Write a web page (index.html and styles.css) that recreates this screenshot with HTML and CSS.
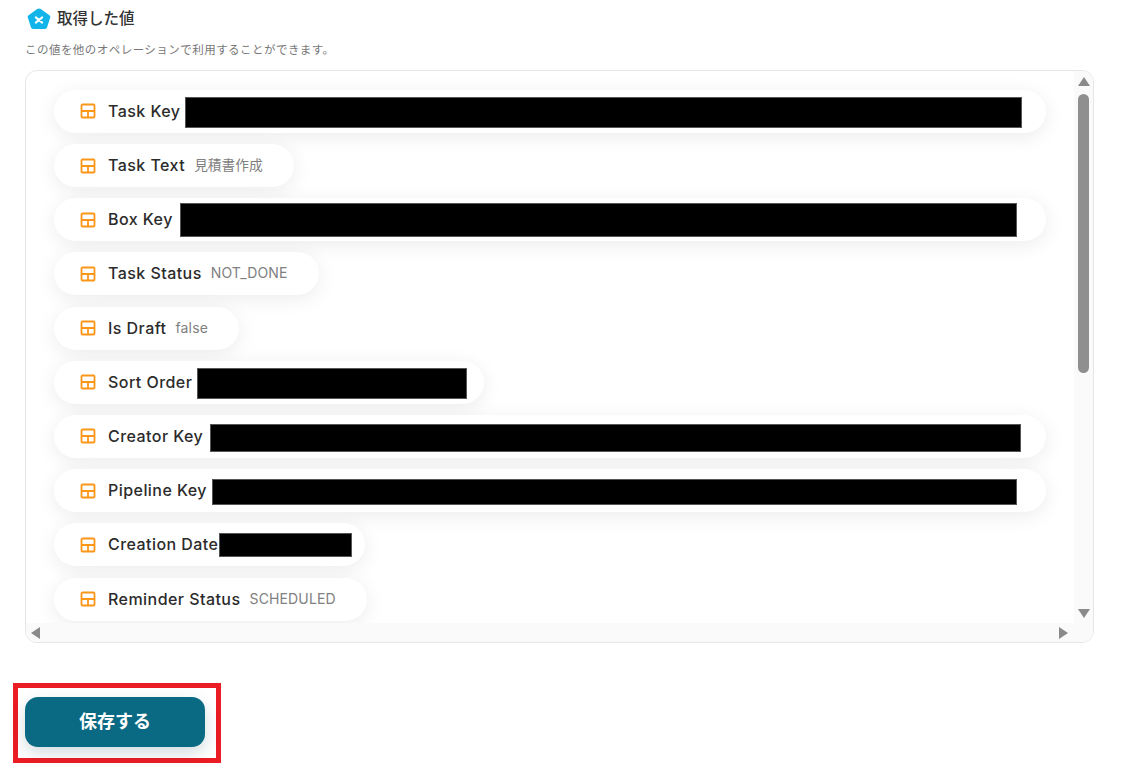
FILE: index.html
```html
<!DOCTYPE html>
<html lang="ja">
<head>
    <meta charset="UTF-8">
    <title>取得した値</title>
    <link rel="stylesheet" href="styles.css">
</head>
<body>
    <div class="page">
        <div class="heading">
            <svg class="heading-icon" width="24" height="22" viewBox="0 0 24 22">
                <path fill="#12b5ea" d="M10.2 1 1.6 7.2c-.8.6-1.1 1.5-.8 2.4l3.2 10c.3.9 1.1 1.4 2 1.4h12c.9 0 1.7-.5 2-1.4l3.2-10c.3-.9 0-1.8-.8-2.4L13.8 1c-1.1-.8-2.5-.8-3.6 0z"/>
                <path fill="none" stroke="#fff" stroke-width="2" stroke-linecap="round" d="M8.8 9.4 15.2 14.6M15.2 9.4 8.8 14.6"/>
            </svg>
            <h2 class="title">取得した値</h2>
        </div>
        <p class="subtitle">この値を他のオペレーションで利用することができます。</p>

        <div class="panel">
            <div class="list">
                <div class="pill wide">
                    <svg class="pill-icon" width="16" height="16" viewBox="0 0 16 16"><path d="M2.5 1.5h11a1 1 0 0 1 1 1v11a1 1 0 0 1-1 1h-11a1 1 0 0 1-1-1v-11a1 1 0 0 1 1-1zM1.5 8h13M8 8v6.5"/></svg>
                    <span class="key">Task Key</span>
                    <span class="redact r-task"></span>
                </div>
                <div class="pill">
                    <svg class="pill-icon" width="16" height="16" viewBox="0 0 16 16"><path d="M2.5 1.5h11a1 1 0 0 1 1 1v11a1 1 0 0 1-1 1h-11a1 1 0 0 1-1-1v-11a1 1 0 0 1 1-1zM1.5 8h13M8 8v6.5"/></svg>
                    <span class="key">Task Text</span>
                    <span class="val val-ja">見積書作成</span>
                </div>
                <div class="pill wide">
                    <svg class="pill-icon" width="16" height="16" viewBox="0 0 16 16"><path d="M2.5 1.5h11a1 1 0 0 1 1 1v11a1 1 0 0 1-1 1h-11a1 1 0 0 1-1-1v-11a1 1 0 0 1 1-1zM1.5 8h13M8 8v6.5"/></svg>
                    <span class="key">Box Key</span>
                    <span class="redact r-box"></span>
                </div>
                <div class="pill">
                    <svg class="pill-icon" width="16" height="16" viewBox="0 0 16 16"><path d="M2.5 1.5h11a1 1 0 0 1 1 1v11a1 1 0 0 1-1 1h-11a1 1 0 0 1-1-1v-11a1 1 0 0 1 1-1zM1.5 8h13M8 8v6.5"/></svg>
                    <span class="key">Task Status</span>
                    <span class="val">NOT_DONE</span>
                </div>
                <div class="pill">
                    <svg class="pill-icon" width="16" height="16" viewBox="0 0 16 16"><path d="M2.5 1.5h11a1 1 0 0 1 1 1v11a1 1 0 0 1-1 1h-11a1 1 0 0 1-1-1v-11a1 1 0 0 1 1-1zM1.5 8h13M8 8v6.5"/></svg>
                    <span class="key">Is Draft</span>
                    <span class="val">false</span>
                </div>
                <div class="pill">
                    <svg class="pill-icon" width="16" height="16" viewBox="0 0 16 16"><path d="M2.5 1.5h11a1 1 0 0 1 1 1v11a1 1 0 0 1-1 1h-11a1 1 0 0 1-1-1v-11a1 1 0 0 1 1-1zM1.5 8h13M8 8v6.5"/></svg>
                    <span class="key">Sort Order</span>
                    <span class="redact r-sort"></span>
                </div>
                <div class="pill wide">
                    <svg class="pill-icon" width="16" height="16" viewBox="0 0 16 16"><path d="M2.5 1.5h11a1 1 0 0 1 1 1v11a1 1 0 0 1-1 1h-11a1 1 0 0 1-1-1v-11a1 1 0 0 1 1-1zM1.5 8h13M8 8v6.5"/></svg>
                    <span class="key">Creator Key</span>
                    <span class="redact r-creator"></span>
                </div>
                <div class="pill wide">
                    <svg class="pill-icon" width="16" height="16" viewBox="0 0 16 16"><path d="M2.5 1.5h11a1 1 0 0 1 1 1v11a1 1 0 0 1-1 1h-11a1 1 0 0 1-1-1v-11a1 1 0 0 1 1-1zM1.5 8h13M8 8v6.5"/></svg>
                    <span class="key">Pipeline Key</span>
                    <span class="redact r-pipeline"></span>
                </div>
                <div class="pill">
                    <svg class="pill-icon" width="16" height="16" viewBox="0 0 16 16"><path d="M2.5 1.5h11a1 1 0 0 1 1 1v11a1 1 0 0 1-1 1h-11a1 1 0 0 1-1-1v-11a1 1 0 0 1 1-1zM1.5 8h13M8 8v6.5"/></svg>
                    <span class="key">Creation Date</span>
                    <span class="redact r-date"></span>
                </div>
                <div class="pill">
                    <svg class="pill-icon" width="16" height="16" viewBox="0 0 16 16"><path d="M2.5 1.5h11a1 1 0 0 1 1 1v11a1 1 0 0 1-1 1h-11a1 1 0 0 1-1-1v-11a1 1 0 0 1 1-1zM1.5 8h13M8 8v6.5"/></svg>
                    <span class="key">Reminder Status</span>
                    <span class="val">SCHEDULED</span>
                </div>
            </div>

            <div class="vbar">
                <span class="arrow up"></span>
                <span class="thumb"></span>
                <span class="arrow down"></span>
            </div>
            <div class="hbar">
                <span class="arrow left"></span>
                <span class="arrow right"></span>
            </div>
        </div>

        <div class="highlight">
            <button class="save-btn">保存する</button>
        </div>
    </div>
</body>
</html>
```

FILE: styles.css
```css
* {
    box-sizing: border-box;
}
body {
    font-family: Inter, "Noto Sans CJK JP", sans-serif;
    background: #fff;
    margin: 0;
    height: 763px;
    overflow: hidden;
}
.page {
    padding: 6px 33px 0 25px;
}
.heading {
    display: flex;
    align-items: center;
    gap: 6px;
    height: 23px;
    padding-left: 2px;
}
.heading-icon {
    margin-top: 2px;
}
.title {
    margin: -2px 0 0;
    font-size: 15.5px;
    font-weight: 500;
    color: #333;
}
.subtitle {
    margin: 13px 0 0;
    font-size: 11.5px;
    line-height: 17px;
    letter-spacing: 0.04em;
    color: #777;
}
.panel {
    display: grid;
    grid-template-columns: 1fr 19px;
    grid-template-rows: 552px 19px;
    margin-top: 11px;
    height: 573px;
    border: 1px solid #e6e6e6;
    border-radius: 12px;
    overflow: hidden;
}
.list {
    display: flex;
    flex-direction: column;
    align-items: flex-start;
    gap: 11.2px;
    padding: 18.85px 0 0 28px;
    overflow: hidden;
}
.pill {
    display: flex;
    align-items: center;
    flex: none;
    height: 43px;
    padding: 0 31.5px 0 26px;
    background: #fff;
    border-radius: 22px;
    box-shadow: 0 4px 20px rgba(0, 0, 0, 0.08);
    white-space: nowrap;
}
.pill.wide {
    width: 992px;
}
.pill-icon {
    flex: none;
    fill: none;
    stroke: #fb9619;
    stroke-width: 1.8;
    margin-right: 12px;
}
.key {
    font-size: 16px;
    line-height: 20px;
    margin-top: -1px;
    font-weight: 500;
    letter-spacing: 0.028em;
    color: #2b2b2b;
}
.val {
    margin: -2px 0 0 9px;
    font-size: 14px;
    letter-spacing: 0.01em;
    color: #808080;
}
.val-ja {
    margin-top: -3px;
    font-size: 13.7px;
    letter-spacing: 0;
}
.redact {
    flex: none;
    background: #000;
    border: 1px solid #555;
}
.r-task {
    width: 837px;
    height: 31px;
    margin: 2px 0 0 5px;
}
.r-box {
    width: 837px;
    height: 34px;
    margin-left: 7px;
}
.r-sort {
    width: 270px;
    height: 31px;
    margin: 2px -14.5px 0 5px;
}
.r-creator {
    width: 811px;
    height: 28px;
    margin: 3px 0 0 7px;
}
.r-pipeline {
    width: 805px;
    height: 26px;
    margin: 3px 0 0 5px;
}
.r-date {
    width: 133px;
    height: 24px;
    margin: 0 -18.5px 0 1px;
}
.vbar {
    display: flex;
    flex-direction: column;
    align-items: center;
    padding: 6px 0 5px;
    background: #fafafa;
}
.thumb {
    width: 11px;
    height: 279px;
    margin-top: 8px;
    margin-bottom: auto;
    background: #8f8f8f;
    border-radius: 6px;
}
.hbar {
    grid-column: 1 / -1;
    display: flex;
    justify-content: space-between;
    align-items: center;
    padding: 0 25px 0 5px;
    background: #fafafa;
}
.arrow {
    width: 0;
    height: 0;
    border-style: solid;
    border-color: transparent;
}
.arrow.up {
    border-width: 0 6px 9px;
    border-bottom-color: #8a8a8a;
}
.arrow.down {
    border-width: 9px 6px 0;
    border-top-color: #8a8a8a;
}
.arrow.left {
    border-width: 6px 9px 6px 0;
    border-right-color: #8a8a8a;
}
.arrow.right {
    border-width: 6px 0 6px 9px;
    border-left-color: #8a8a8a;
}
/* red annotation round the button */
.highlight {
    width: 208px;
    height: 80px;
    margin: 40px 0 0 -12px;
    padding: 9px 0 0 7px;
    border: 5px solid #ea1c24;
}
.save-btn {
    display: block;
    width: 180px;
    height: 50px;
    padding-bottom: 5px;
    background: #0b6a83;
    color: #fff;
    border: none;
    border-radius: 13px;
    font-family: inherit;
    font-size: 18px;
    font-weight: 700;
    box-shadow: 0 6px 16px rgba(11, 60, 80, 0.18);
}
```
